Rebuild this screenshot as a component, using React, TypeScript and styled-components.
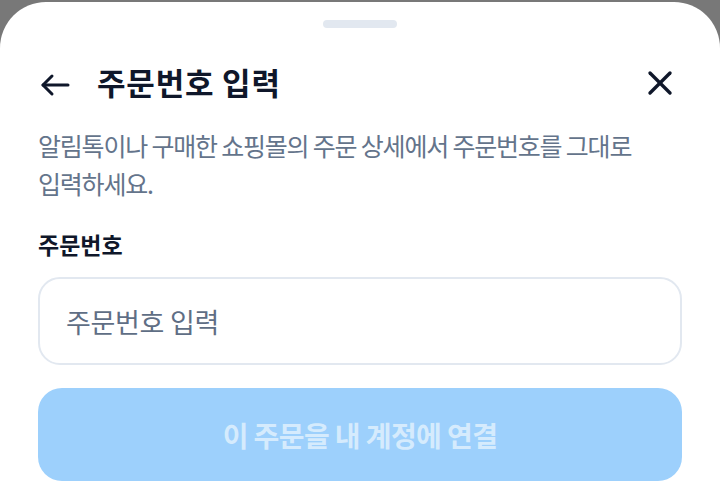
import React from "react";
import styled, { createGlobalStyle } from "styled-components";

const Global = createGlobalStyle`
  html, body { margin: 0; padding: 0; background: #787878; }
  body { font-family: "Noto Sans CJK KR", "Noto Sans", sans-serif; overflow: hidden; }
  * { box-sizing: border-box; }
`;

const Backdrop = styled.div`
  width: 720px;
  height: 503px;
  display: flex;
  flex-direction: column;
  align-items: center;
  padding-top: 2px;
  overflow: hidden;
`;

const Sheet = styled.div`
  width: 720px;
  flex: 1;
  background: #ffffff;
  border-radius: 46px 46px 0 0;
  display: flex;
  flex-direction: column;
  padding: 0 38px;
`;

const Handle = styled.div`
  width: 74px;
  height: 8px;
  border-radius: 4px;
  background: #e2e8f0;
  margin: 18px auto 0;
`;

const Header = styled.div`
  display: flex;
  align-items: center;
  height: 48px;
  margin-top: 31px;
`;

const IconButton = styled.button<{ $dy?: number; $mr?: number }>`
  border: none;
  background: none;
  padding: 0;
  display: flex;
  align-items: center;
  justify-content: center;
  width: 34px;
  height: 34px;
  color: #0f172a;
  cursor: pointer;
  margin-top: ${(p) => (p.$dy ?? 0) * 2}px;
  margin-right: ${(p) => p.$mr ?? 0}px;
`;

const Title = styled.h1`
  margin: 0 0 4px 25px;
  flex: 1;
  font-size: 31px;
  font-weight: 700;
  color: #0f172a;
  letter-spacing: 0.8px;
  line-height: 1;
`;

const Description = styled.p`
  margin: 19px 0 0;
  font-size: 25px;
  line-height: 38px;
  color: #64748b;
  letter-spacing: -1.2px;
  font-weight: 400;
  word-break: keep-all;
`;

const Label = styled.label`
  margin-top: 28px;
  font-size: 23px;
  font-weight: 600;
  color: #0f172a;
  letter-spacing: 0;
  line-height: 28px;
`;

const Input = styled.input`
  margin-top: 19px;
  width: 100%;
  height: 88px;
  border: 2px solid #e2e8f0;
  border-radius: 22px;
  padding: 0 26px;
  font-family: "Noto Sans CJK KR", "Noto Sans", sans-serif;
  font-size: 27px;
  letter-spacing: -0.3px;
  color: #0f172a;
  outline: none;
  &::placeholder { color: #5f6e85; }
`;

const Submit = styled.button`
  margin-top: 23px;
  width: 100%;
  height: 93px;
  border: none;
  border-radius: 24px;
  background: #9dd0fc;
  color: #d5ebfd;
  font-family: "Noto Sans CJK KR", "Noto Sans", sans-serif;
  font-size: 28px;
  font-weight: 600;
  letter-spacing: -0.6px;
`;

export default function App() {
  return (
    <>
      <Global />
      <Backdrop>
        <Sheet>
          <Handle />
          <Header>
            <IconButton aria-label="뒤로" $dy={2}>
              <svg width="30" height="24" viewBox="0 0 30 24" fill="none" stroke="currentColor" strokeWidth="3" strokeLinecap="round" strokeLinejoin="round">
                <path d="M28 12H3" />
                <path d="M12 3L3 12l9 9" />
              </svg>
            </IconButton>
            <Title>주문번호 입력</Title>
            <IconButton aria-label="닫기" $mr={5}>
              <svg width="26" height="26" viewBox="0 0 26 26" fill="none" stroke="currentColor" strokeWidth="3.4" strokeLinecap="round">
                <path d="M3 3l20 20" />
                <path d="M23 3L3 23" />
              </svg>
            </IconButton>
          </Header>
          <Description>알림톡이나 구매한 쇼핑몰의 주문 상세에서 주문번호를 그대로 입력하세요.</Description>
          <Label htmlFor="order">주문번호</Label>
          <Input id="order" placeholder="주문번호 입력" />
          <Submit disabled>이 주문을 내 계정에 연결</Submit>
        </Sheet>
      </Backdrop>
    </>
  );
}
